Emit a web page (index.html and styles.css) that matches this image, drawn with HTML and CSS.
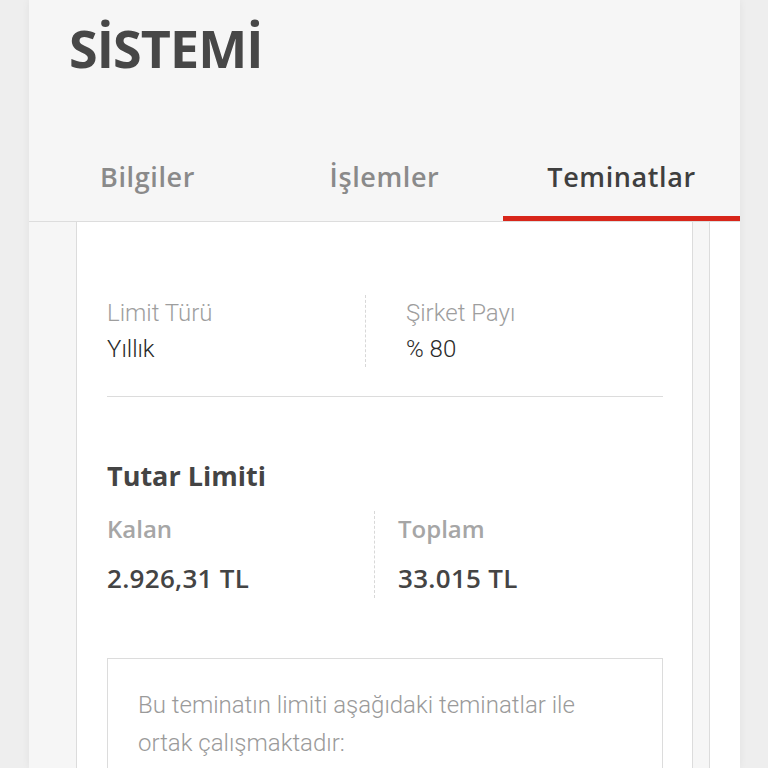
FILE: index.html
```html
<!DOCTYPE html>
<html lang="tr">
<head>
<meta charset="utf-8">
<link rel="stylesheet" href="styles.css">
</head>
<body>
<div class="panel">
  <header class="head">
    <h1 class="title">SİSTEMİ</h1>
    <nav class="tabs">
      <div class="tab">Bilgiler</div>
      <div class="tab">İşlemler</div>
      <div class="tab active">Teminatlar</div>
    </nav>
  </header>
  <div class="content">
    <section class="card">
      <div class="row1">
        <div class="cell">
          <div class="lbl">Limit Türü</div>
          <div class="val">Yıllık</div>
        </div>
        <div class="cell right">
          <div class="lbl">Şirket Payı</div>
          <div class="val">% 80</div>
        </div>
      </div>
      <hr class="sep">
      <h2 class="sub">Tutar Limiti</h2>
      <div class="row2">
        <div class="cell">
          <div class="lbl2">Kalan</div>
          <div class="val2">2.926,31 TL</div>
        </div>
        <div class="cell right">
          <div class="lbl2">Toplam</div>
          <div class="val2">33.015 TL</div>
        </div>
      </div>
      <div class="note">Bu teminatın limiti aşağıdaki teminatlar ile ortak çalışmaktadır:</div>
    </section>
    <div class="gap"></div>
    <section class="card next"></section>
  </div>
</div>
</body>
</html>
```
FILE: styles.css
```css
html, body { margin: 0; padding: 0; }
body {
  background: #eeeeee;
  height: 768px;
  overflow: hidden;
  font-family: "Open Sans", sans-serif;
}
.panel {
  margin-left: 29px;
  width: 711px;
  height: 768px;
  background: #f6f6f6;
  display: flex;
  flex-direction: column;
  box-shadow: 0 0 8px rgba(0,0,0,0.06);
}
.head {
  border-bottom: 1px solid #dddddd;
}
.title {
  margin: 0;
  padding: 15px 0 0 40px;
  height: 126px;
  box-sizing: border-box;
  font-family: "Open Sans", sans-serif;
  font-weight: 700;
  font-size: 52px;
  line-height: 66px;
  color: #474747;
  letter-spacing: -0.9px;
}
.tabs {
  display: grid;
  grid-template-columns: repeat(3, 1fr);
  height: 95px;
}
.tab {
  display: flex;
  justify-content: center;
  align-items: center;
  padding-top: 11px;
  font-size: 27px;
  font-weight: 600;
  letter-spacing: 0.6px;
  color: #8a8a8a;
  border-bottom: 5px solid transparent;
}
.tab.active {
  color: #3f3f3f;
  border-bottom-color: #d8261a;
}
.content {
  flex: 1;
  display: flex;
  padding-left: 47px;
}
.card {
  width: 556px;
  flex: none;
  background: #fff;
  border-left: 1px solid #dcdcdc;
  border-right: 1px solid #dcdcdc;
  padding: 0 29px 0 30px;
}
.gap { width: 16px; flex: none; }
.card.next { width: 30px; padding: 0; border-right: none; flex: 1; }
.row1 {
  display: grid;
  grid-template-columns: 258px 1fr;
  margin-top: 73px;
}
.row1 .right { border-left: 1px dashed #d8d8d8; padding-left: 40px; }
.lbl {
  font-family: Roboto, sans-serif;
  font-weight: 300;
  font-size: 24px;
  line-height: 36px;
  color: #9e9e9e;
}
.val {
  font-family: Roboto, sans-serif;
  font-weight: 300;
  font-size: 24px;
  line-height: 36px;
  color: #2a2a2a;
}
.sep {
  margin: 29px 0 0;
  border: none;
  border-top: 1px solid #dcdcdc;
}
.sub {
  margin: 62px 0 0;
  font-size: 27px;
  font-weight: 700;
  line-height: 34px;
  color: #444;
}
.row2 {
  display: grid;
  grid-template-columns: 267px 1fr;
  margin-top: 18px;
}
.row2 .right { border-left: 1px dashed #d8d8d8; padding-left: 23px; }
.lbl2 {
  font-size: 24px;
  font-weight: 600;
  line-height: 36px;
  color: #a6a6a6;
}
.val2 {
  padding-top: 11px;
  font-size: 26px;
  font-weight: 600;
  line-height: 40px;
  letter-spacing: 0.3px;
  color: #444;
}
.note {
  margin-top: 60px;
  border: 1px solid #dcdcdc;
  padding: 27px 40px 27px 30px;
  font-family: Roboto, sans-serif;
  font-weight: 300;
  font-size: 24px;
  line-height: 38px;
  color: #9a9a9a;
}
```
